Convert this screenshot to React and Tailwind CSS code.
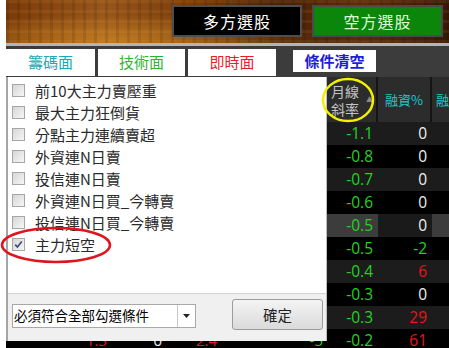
import React from "react";

const conditions = [
  { label: "前10大主力賣壓重", checked: false },
  { label: "最大主力狂倒貨", checked: false },
  { label: "分點主力連續賣超", checked: false },
  { label: "外資連N日賣", checked: false },
  { label: "投信連N日賣", checked: false },
  { label: "外資連N日買_今轉賣", checked: false },
  { label: "投信連N日買_今轉賣", checked: false },
  { label: "主力短空", checked: true },
];

// 前六欄被選單蓋住，只有最後一列露出一點點
const rows = [
  { hidden: ["", "", "", "", "", ""], slope: "-1.1", margin: "0" },
  { hidden: ["", "", "", "", "", ""], slope: "-0.8", margin: "0" },
  { hidden: ["", "", "", "", "", ""], slope: "-0.7", margin: "0" },
  { hidden: ["", "", "", "", "", ""], slope: "-0.6", margin: "0" },
  { hidden: ["", "", "", "", "", ""], slope: "-0.5", margin: "0" },
  { hidden: ["", "", "", "", "", ""], slope: "-0.5", margin: "-2" },
  { hidden: ["", "", "", "", "", ""], slope: "-0.4", margin: "6" },
  { hidden: ["", "", "", "", "", ""], slope: "-0.3", margin: "0" },
  { hidden: ["", "", "", "", "", ""], slope: "-0.3", margin: "29" },
  { hidden: ["", "1.3", "0", "2.4", "", "-5"], slope: "-0.2", margin: "61" },
];

const numColor = (v) => {
  if (v === "0") return "text-[#f0f0f0]";
  if (v.startsWith("-")) return "text-[#22d322]";
  return "text-[#e8141e]";
};

const rowBg = (i) => (i % 2 === 0 ? "bg-[#1c1c1c]" : "bg-black");

const Checkbox = ({ checked }) => (
  <div className="w-[13px] h-[13px] border border-[#a6a6a6] bg-gradient-to-br from-[#d6d6d6] to-[#f6f6f6] flex items-center justify-center shrink-0">
    {checked && (
      <svg width="9" height="9" viewBox="0 0 9 9">
        <path d="M1.2 4.6 L3.4 7 L7.8 1.4" fill="none" stroke="#3b4c78" strokeWidth="1.6" />
      </svg>
    )}
  </div>
);

export default function App() {
  return (
    <div className="relative w-[449px] h-[348px] overflow-hidden bg-white pl-[6px] font-['Noto_Sans_CJK_TC','Noto_Sans',sans-serif]">
      {/* 上方選股按鈕 */}
      <div className="h-[43px] flex justify-end items-start gap-[10px] pt-[5px] pr-[6px] bg-[repeating-linear-gradient(90deg,rgba(0,0,0,0.1)_0px,rgba(0,0,0,0.1)_3px,transparent_3px,transparent_11px),repeating-linear-gradient(0deg,rgba(255,200,80,0.08)_0px,rgba(255,200,80,0.08)_3px,transparent_3px,transparent_10px),radial-gradient(ellipse_at_25%_90%,rgba(220,150,40,0.55)_0%,transparent_45%),linear-gradient(90deg,#7a3a0a_0%,#98561a_22%,#7a3c0c_42%,#4a2208_62%,#5e2c0a_80%,#3a1806_100%)]">
        <button className="w-[130px] h-[32px] bg-black border-2 border-[#4e4e4e] text-white text-[16px] tracking-[1px]">
          多方選股
        </button>
        <button className="w-[131px] h-[32px] bg-[#0b860b] border-2 border-[#4a4a4a] text-[#dff5d8] text-[16px] tracking-[1px]">
          空方選股
        </button>
      </div>
      <div className="h-[3px] bg-[#b4b4b4]" />

      {/* 分頁 */}
      <div className="h-[31px] bg-[#3c3c3c] flex items-start text-[15px]">
        <div className="mt-[3px] h-[27px] w-[89px] bg-white flex items-center justify-center text-[#22a6b4]">籌碼面</div>
        <div className="mt-[3px] ml-[3px] h-[27px] w-[87px] bg-white flex items-center justify-center text-[#2fb42f]">技術面</div>
        <div className="mt-[3px] ml-[3px] h-[27px] w-[88px] bg-white flex items-center justify-center text-[#ec1c2c]">即時面</div>
        <div className="mt-[4px] ml-[17px] h-[22px] w-[83px] bg-white flex items-center justify-center text-[#1e1ed6] font-bold">條件清空</div>
      </div>

      {/* 表格 + 條件選單 */}
      <div className="relative">
        <div className="grid grid-cols-[50px_55px_55px_55px_55px_51px_51px_54px_1fr] bg-black">
          {[0, 1, 2, 3, 4, 5].map((k) => (
            <div key={k} className="h-[45px] bg-[#2c2c2c] border-r-2 border-[#141414]" />
          ))}
          <div className="h-[45px] bg-[#2c2c2c] border-r-2 border-[#141414] flex items-center pl-[4px] pr-[3px] text-[#c4c4c4]">
            <div className="text-[14px] leading-[18px]">
              <div>月線</div>
              <div>斜率</div>
            </div>
            <span className="ml-auto text-[7px] text-[#8a8a8a]">▲</span>
          </div>
          <div className="h-[45px] bg-[#2c2c2c] border-r-2 border-[#141414] flex items-center justify-center text-[13px] text-[#1ec8c8]">
            融資%
          </div>
          <div className="h-[45px] bg-[#2c2c2c] flex items-center pl-[4px] text-[13px] text-[#1ec8c8] whitespace-nowrap overflow-hidden">
            融
          </div>

          {rows.map((r, i) => (
            <React.Fragment key={i}>
              {r.hidden.map((v, j) => (
                <div key={j} className={`h-[23px] ${rowBg(i)} flex items-center justify-end pr-[4px] text-[15px] font-['Open_Sans',sans-serif] ${numColor(v)}`}>
                  {v}
                </div>
              ))}
              <div className={`h-[23px] ${i === 4 ? "bg-[#3c3c3c]" : rowBg(i)} flex items-center justify-end pr-[5px] text-[15.5px] font-['Open_Sans',sans-serif] ${numColor(r.slope)}`}>
                {r.slope}
              </div>
              <div className={`h-[23px] ${i === 4 ? "bg-[#1a1a1a]" : rowBg(i)} flex items-center justify-end pr-[5px] text-[15.5px] font-['Open_Sans',sans-serif] ${numColor(r.margin)}`}>
                {r.margin}
              </div>
              <div className={`h-[23px] ${i === 4 ? "bg-[#3c3c3c]" : rowBg(i)}`} />
            </React.Fragment>
          ))}
        </div>

        {/* 下拉條件選單 */}
        <div className="absolute left-0 top-0 w-[321px] h-[264px] bg-white border-l-2 border-[#a4a4a4] border-r border-r-[#bdbdbd] flex flex-col">
          <div className="h-[216px] pt-[2px] pl-[4px] text-[15px] text-[#2a2a2a]">
            {conditions.map((c) => (
              <div key={c.label} className="h-[22px] flex items-center gap-[10px]">
                <Checkbox checked={c.checked} />
                <span className="leading-none">{c.label}</span>
              </div>
            ))}
          </div>
          <div className="flex-1 bg-[#f0f0f0] border-t border-[#d2d2d2] flex items-start pl-[4px]">
            <div className="mt-[10px] w-[184px] h-[24px] bg-white border border-[#a8a8a8] flex items-center">
              <span className="flex-1 pl-[1px] text-[13.5px] text-black leading-none">必須符合全部勾選條件</span>
              <div className="w-[18px] h-full border-l border-[#c8c8c8] flex items-center justify-center">
                <svg width="7" height="4" viewBox="0 0 7 4">
                  <path d="M0 0 L7 0 L3.5 4 Z" fill="#222" />
                </svg>
              </div>
            </div>
            <button className="mt-[5px] ml-[36px] w-[91px] h-[31px] rounded-[3px] border border-[#9c9c9c] bg-gradient-to-b from-[#f4f4f4] to-[#dadada] text-[14.5px] text-[#222]">
              確定
            </button>
          </div>
        </div>
      </div>

      {/* 標註圈選 */}
      <svg className="absolute left-0 top-0 pointer-events-none" width="449" height="348">
        <ellipse cx="348" cy="100" rx="25" ry="21" fill="none" stroke="#f2f200" strokeWidth="2.5" />
        <ellipse cx="56" cy="245" rx="54" ry="17" fill="none" stroke="#e0141c" strokeWidth="2.5" />
      </svg>
    </div>
  );
}
